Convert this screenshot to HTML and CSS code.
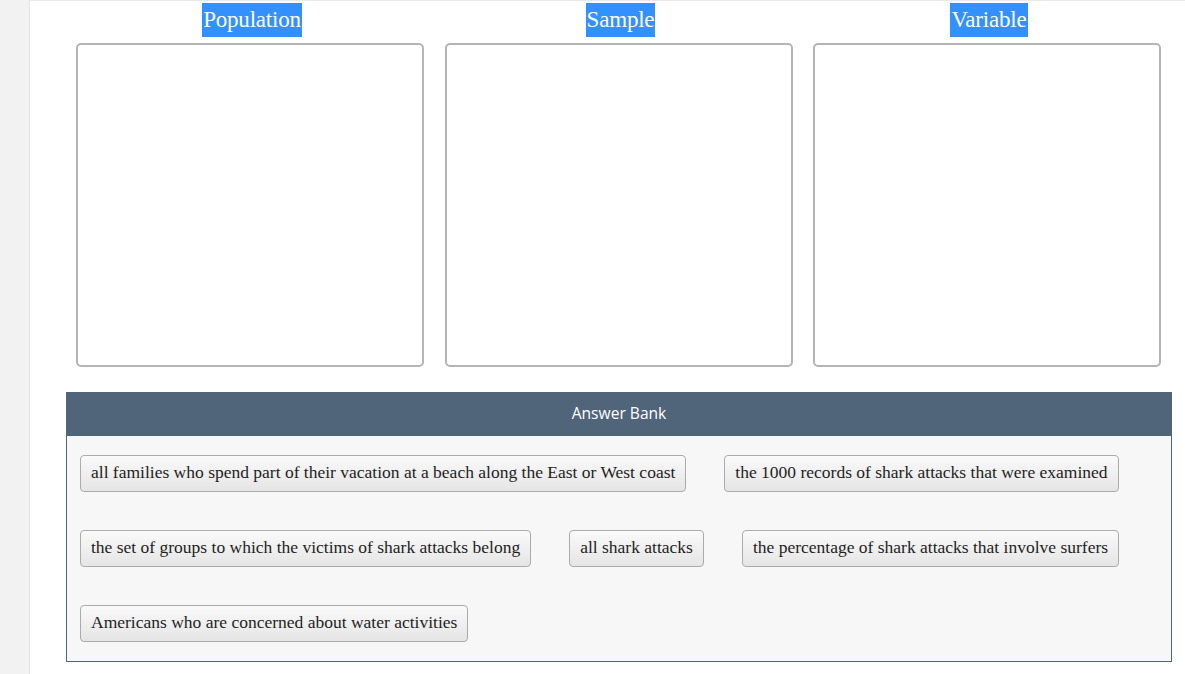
FILE: index.html
```html
<!DOCTYPE html>
<html>
<head>
<meta charset="utf-8">
<link rel="stylesheet" href="styles.css">
</head>
<body>
<div class="page">
  <div class="sidebar"></div>
  <div class="main">
    <div class="columns">
      <div class="column">
        <span class="label">Population</span>
        <div class="dropbox"></div>
      </div>
      <div class="column">
        <span class="label">Sample</span>
        <div class="dropbox"></div>
      </div>
      <div class="column">
        <span class="label">Variable</span>
        <div class="dropbox"></div>
      </div>
    </div>
    <div class="bank">
      <div class="bank-header">Answer Bank</div>
      <div class="bank-body">
        <div class="chip">all families who spend part of their vacation at a beach along the East or West coast</div>
        <div class="chip">the 1000 records of shark attacks that were examined</div>
        <div class="chip">the set of groups to which the victims of shark attacks belong</div>
        <div class="chip">all shark attacks</div>
        <div class="chip">the percentage of shark attacks that involve surfers</div>
        <div class="chip">Americans who are concerned about water activities</div>
      </div>
    </div>
  </div>
</div>
</body>
</html>
```
FILE: styles.css
```css
html, body {
  margin: 0;
  padding: 0;
  background: #ffffff;
}
.page {
  display: flex;
  width: 1185px;
  height: 674px;
  overflow: hidden;
}
.sidebar {
  width: 29px;
  flex: none;
  background: #f2f2f2;
  border-right: 1px solid #e4e4e4;
}
.main {
  flex: 1;
  border-top: 1px solid #e9e9e9;
  background: #ffffff;
}
.columns {
  display: flex;
  gap: 20.5px;
  padding-left: 46px;
  padding-top: 2px;
}
.column {
  width: 348px;
  display: flex;
  flex-direction: column;
  align-items: center;
}
.label {
  display: inline-block;
  background: #3390ff;
  color: #ffffff;
  font-family: "Liberation Serif", "Times New Roman", serif;
  font-size: 23px;
  line-height: 34px;
  height: 34px;
  letter-spacing: -0.2px;
  padding: 0 1px;
  margin-left: 4px;
}
.dropbox {
  margin-top: 6px;
  width: 348px;
  height: 324px;
  box-sizing: border-box;
  border: 2px solid #b5b5b5;
  border-radius: 5px;
  background: #ffffff;
}
.bank {
  margin: 25px 0 0 36px;
  width: 1106px;
  box-sizing: border-box;
  border: 1px solid #50647a;
}
.bank-header {
  background: #50647a;
  color: #ffffff;
  font-family: "Open Sans", "Noto Sans", sans-serif;
  font-size: 15.6px;
  height: 44px;
  line-height: 43px;
  text-align: center;
  margin: -1px -1px 0 -1px;
}
.bank-body {
  background: #f7f7f7;
  display: flex;
  flex-wrap: wrap;
  column-gap: 38px;
  row-gap: 38px;
  padding: 19px 13px 19px 13px;
}
.chip {
  height: 37px;
  box-sizing: border-box;
  border: 1px solid #ababab;
  border-radius: 4px;
  background: linear-gradient(#fafafa, #e5e5e5);
  color: #1e1e1e;
  font-family: "Liberation Serif", "Times New Roman", serif;
  font-size: 17.5px;
  line-height: 32px;
  padding: 0 10px;
  white-space: nowrap;
}
```
